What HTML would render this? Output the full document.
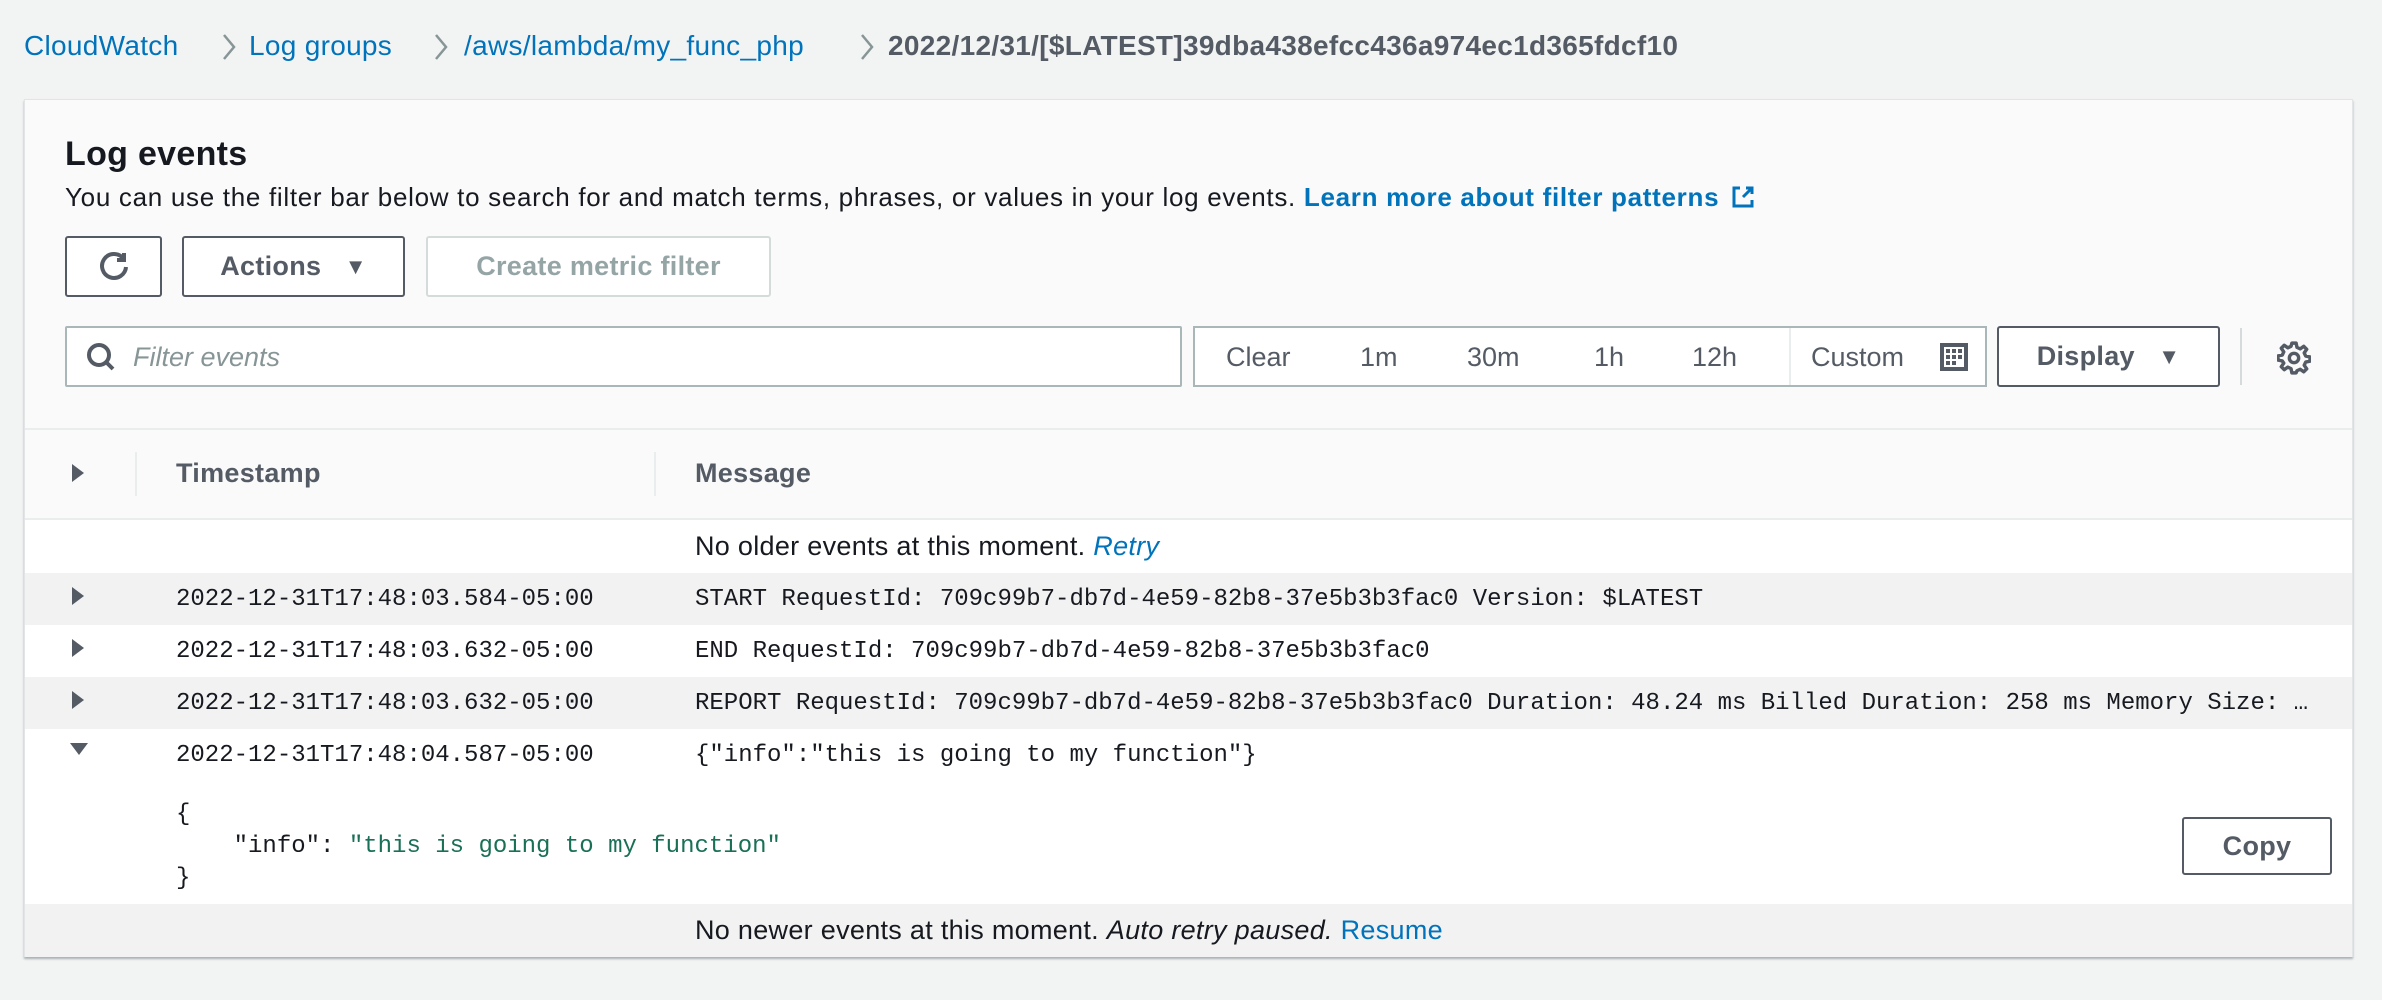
<!DOCTYPE html>
<html><head><meta charset="utf-8"><style>
*{box-sizing:border-box;margin:0;padding:0}
body{width:2382px;height:1000px;background:#f2f3f3;font-family:"Liberation Sans",sans-serif;color:#16191f;position:relative;overflow:hidden}
.a{position:absolute;white-space:nowrap}
.bc{top:29px;font-size:28px;line-height:34px;letter-spacing:0.3px}
.lk{color:#0073bb}
#panel{position:absolute;left:24px;top:99px;width:2329px;height:858px;background:#fafafa;border:1px solid #e2e5e5;box-shadow:0 2px 2px rgba(0,28,36,.3)}
.btn{position:absolute;border:2px solid #545b64;border-radius:3px;background:#fff;font-weight:bold;font-size:27px;color:#545b64;display:flex;align-items:center;justify-content:center;letter-spacing:0.3px}
.mono{font-family:"Liberation Mono",monospace;font-size:24px}
.row{position:absolute;left:0;width:2327px;height:52px}
.tri{position:absolute;left:47px;width:0;height:0;border-top:9px solid transparent;border-bottom:9px solid transparent;border-left:12px solid #545b64}
.sans{font-size:27px;letter-spacing:0.3px}
</style></head><body>
<div class="a bc" style="left:24px"><span class="lk">CloudWatch</span></div>
<svg class="a" style="left:222px;top:33px" width="14" height="28" viewBox="0 0 14 28"><path d="M2 2l10 12L2 26" fill="none" stroke="#879596" stroke-width="2.5"/></svg>
<div class="a bc" style="left:249px"><span class="lk">Log groups</span></div>
<svg class="a" style="left:434px;top:33px" width="14" height="28" viewBox="0 0 14 28"><path d="M2 2l10 12L2 26" fill="none" stroke="#879596" stroke-width="2.5"/></svg>
<div class="a bc" style="left:464px"><span class="lk">/aws/lambda/my_func_php</span></div>
<svg class="a" style="left:860px;top:33px" width="14" height="28" viewBox="0 0 14 28"><path d="M2 2l10 12L2 26" fill="none" stroke="#879596" stroke-width="2.5"/></svg>
<div class="a bc" style="left:888px;color:#545b64;font-weight:bold">2022/12/31/[$LATEST]39dba438efcc436a974ec1d365fdcf10</div>

<div id="panel">
<div class="a" style="left:40px;top:35px;font-size:34px;font-weight:bold;letter-spacing:0.3px">Log events</div>
<div class="a" style="left:40px;top:82px;font-size:26px;letter-spacing:0.7px">You can use the filter bar below to search for and match terms, phrases, or values in your log events. <b class="lk">Learn more about filter patterns</b>
<svg width="24" height="24" viewBox="0 0 16 16" style="vertical-align:-3px;margin-left:4px"><path d="M10 2h4v4M14 2L8 8M6 2H2v12h12v-4" fill="none" stroke="#0073bb" stroke-width="2"/></svg></div>

<div class="btn" style="left:40px;top:136px;width:97px;height:61px"><svg width="32" height="32" viewBox="0 0 16 16"><path d="M12.5 3.5A6 6 0 1 0 14 8" fill="none" stroke="#545b64" stroke-width="2"/><path d="M13 1v3.5H9.5" fill="none" stroke="#545b64" stroke-width="2"/></svg></div>
<div class="btn" style="left:157px;top:136px;width:223px;height:61px">Actions&nbsp;&nbsp;&nbsp;<span style="font-size:22px">&#9660;</span></div>
<div class="btn" style="left:401px;top:136px;width:345px;height:61px;border-color:#d5dbdb;color:#95a5a6">Create metric filter</div>

<div class="a" style="left:40px;top:226px;width:1117px;height:61px;border:2px solid #aab7b8;border-radius:2px;background:#fff">
<svg class="a" style="left:18px;top:13px" width="32" height="32" viewBox="0 0 16 16"><circle cx="7" cy="7" r="5" fill="none" stroke="#545b64" stroke-width="2"/><path d="M10.5 10.5L14 14" stroke="#545b64" stroke-width="2"/></svg>
<div class="a" style="left:66px;top:14px;font-size:27px;font-style:italic;color:#879596">Filter events</div></div>

<div class="a" style="left:1168px;top:226px;width:794px;height:61px;border:2px solid #aab7b8;background:#fff;font-size:27px;color:#545b64">
<span class="a" style="left:31px;top:14px">Clear</span>
<span class="a" style="left:165px;top:14px">1m</span>
<span class="a" style="left:272px;top:14px">30m</span>
<span class="a" style="left:399px;top:14px">1h</span>
<span class="a" style="left:497px;top:14px">12h</span>
<div class="a" style="left:594px;top:0;width:2px;height:57px;background:#eaeded"></div>
<span class="a" style="left:616px;top:14px">Custom</span>
<svg class="a" style="left:745px;top:15px" width="28" height="28" viewBox="0 0 14 14"><rect x="1" y="1" width="12" height="12" fill="none" stroke="#545b64" stroke-width="2"/><g fill="#545b64"><rect x="3" y="3" width="2" height="2"/><rect x="6" y="3" width="2" height="2"/><rect x="9" y="3" width="2" height="2"/><rect x="3" y="6" width="2" height="2"/><rect x="6" y="6" width="2" height="2"/><rect x="9" y="6" width="2" height="2"/><rect x="3" y="9" width="2" height="2"/><rect x="6" y="9" width="2" height="2"/></g></svg>
</div>
<div class="btn" style="left:1972px;top:226px;width:223px;height:61px">Display&nbsp;&nbsp;&nbsp;<span style="font-size:22px">&#9660;</span></div>
<div class="a" style="left:2215px;top:228px;width:2px;height:57px;background:#d5dbdb"></div>
<svg class="a" style="left:2252px;top:241px" width="34" height="34" viewBox="0 0 16 16"><path d="M7 1h2l.4 2 1.5.7 1.7-1.2 1.4 1.4-1.2 1.7.7 1.5 2 .4v2l-2 .4-.7 1.5 1.2 1.7-1.4 1.4-1.7-1.2-1.5.7L9 15H7l-.4-2-1.5-.7-1.7 1.2-1.4-1.4 1.2-1.7L2.5 9.4.5 9V7l2-.4.7-1.5L2 3.4 3.4 2l1.7 1.2 1.5-.7z" fill="none" stroke="#545b64" stroke-width="1.6" stroke-linejoin="round"/><circle cx="8" cy="8" r="2.2" fill="none" stroke="#545b64" stroke-width="1.6"/></svg>

<div class="a" style="left:0;top:328px;width:2327px;height:2px;background:#eaeded"></div>
<div class="a" style="left:0;top:418px;width:2327px;height:2px;background:#eaeded"></div>
<div class="tri" style="top:364px"></div>
<div class="a" style="left:110px;top:352px;width:2px;height:44px;background:#eaeded"></div>
<div class="a" style="left:151px;top:358px;font-size:27px;font-weight:bold;color:#545b64;letter-spacing:0.3px">Timestamp</div>
<div class="a" style="left:629px;top:352px;width:2px;height:44px;background:#eaeded"></div>
<div class="a" style="left:670px;top:358px;font-size:27px;font-weight:bold;color:#545b64;letter-spacing:0.3px">Message</div>

<div class="row" style="top:420px;background:#fff;height:53px"><div class="a sans" style="left:670px;top:11px">No older events at this moment. <i class="lk">Retry</i></div></div>
<div class="row mono" style="top:473px;background:#f2f2f2"><div class="tri" style="top:14px"></div><div class="a" style="left:151px;top:13px">2022-12-31T17:48:03.584-05:00</div><div class="a" style="left:670px;top:13px">START RequestId: 709c99b7-db7d-4e59-82b8-37e5b3b3fac0 Version: $LATEST</div></div>
<div class="row mono" style="top:525px;background:#fff"><div class="tri" style="top:14px"></div><div class="a" style="left:151px;top:13px">2022-12-31T17:48:03.632-05:00</div><div class="a" style="left:670px;top:13px">END RequestId: 709c99b7-db7d-4e59-82b8-37e5b3b3fac0</div></div>
<div class="row mono" style="top:577px;background:#f2f2f2"><div class="tri" style="top:14px"></div><div class="a" style="left:151px;top:13px">2022-12-31T17:48:03.632-05:00</div><div class="a" style="left:670px;top:13px">REPORT RequestId: 709c99b7-db7d-4e59-82b8-37e5b3b3fac0 Duration: 48.24 ms Billed Duration: 258 ms Memory Size: …</div></div>
<div class="row mono" style="top:629px;background:#fff;height:175px">
<div class="a" style="left:45px;top:14px;width:0;height:0;border-left:9px solid transparent;border-right:9px solid transparent;border-top:12px solid #545b64"></div>
<div class="a" style="left:151px;top:13px">2022-12-31T17:48:04.587-05:00</div><div class="a" style="left:670px;top:13px">{"info":"this is going to my function"}</div>
<div class="a" style="left:151px;top:70px;line-height:32px">{<br>&nbsp;&nbsp;&nbsp;&nbsp;"info": <span style="color:#1a7057">"this is going to my function"</span><br>}</div>
<div class="btn" style="left:2157px;top:88px;width:150px;height:58px;font-family:'Liberation Sans',sans-serif">Copy</div>
</div>
<div class="row" style="top:804px;background:#f2f2f2;height:53px"><div class="a sans" style="left:670px;top:11px">No newer events at this moment. <i>Auto retry paused.</i> <span class="lk">Resume</span></div></div>
</div>
</body></html>
